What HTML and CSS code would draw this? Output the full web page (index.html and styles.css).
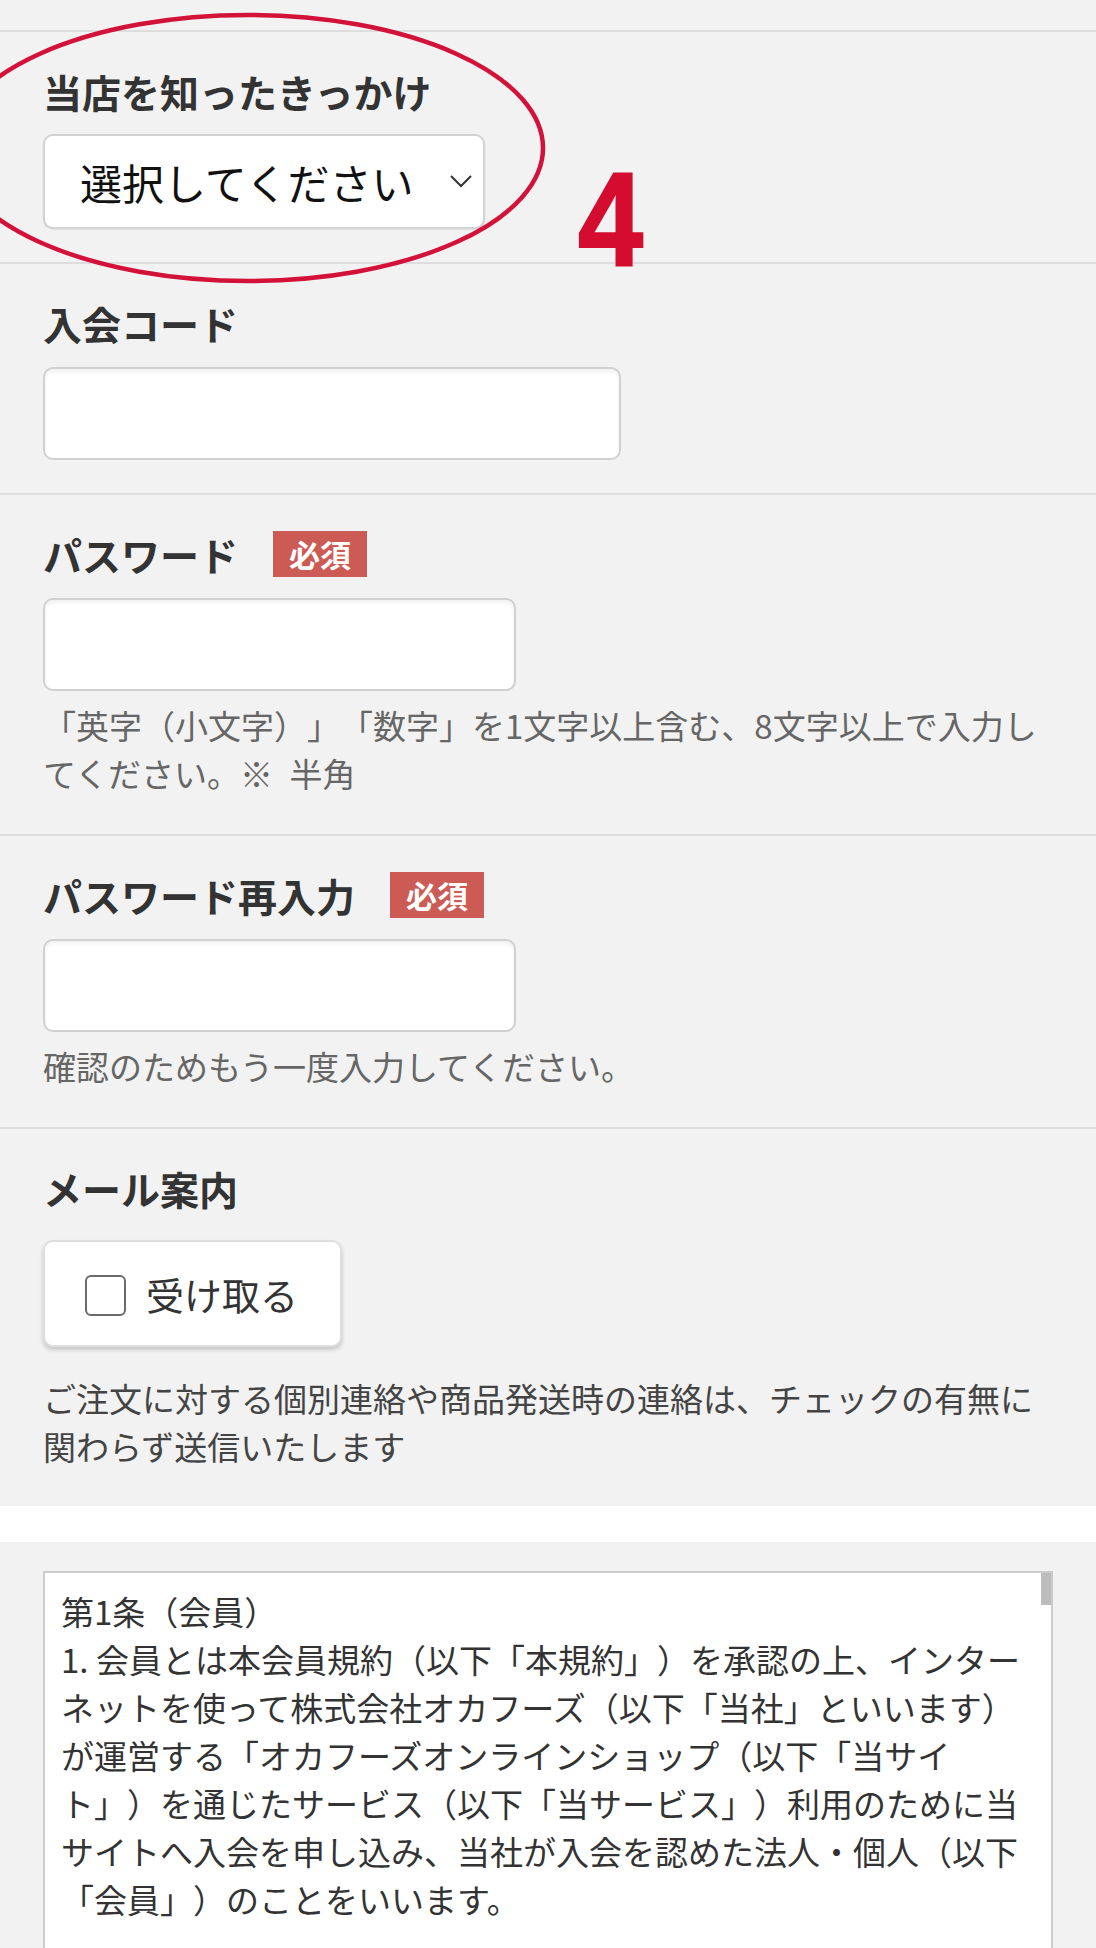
FILE: index.html
```html
<!DOCTYPE html>
<html lang="ja">
<head>
<meta charset="utf-8">
<title>会員登録</title>
<link rel="stylesheet" href="styles.css">
</head>
<body>
<div class="page">
  <div class="top"></div>

  <div class="field">
    <div class="label-row"><span class="label">当店を知ったきっかけ</span></div>
    <div class="select">
      <span class="select-text">選択してください</span>
      <svg class="chev" width="22" height="13" viewBox="0 0 22 13"><polyline points="1,1 11,11 21,1" fill="none" stroke="#333" stroke-width="2"/></svg>
    </div>
  </div>

  <div class="field">
    <div class="label-row"><span class="label">入会コード</span></div>
    <div class="input input-wide"></div>
  </div>

  <div class="field">
    <div class="label-row"><span class="label">パスワード</span><span class="badge">必須</span></div>
    <div class="input input-mid"></div>
    <p class="help">「英字（小文字）」「数字」を1文字以上含む、8文字以上で入力してください。※&ensp;半角</p>
  </div>

  <div class="field">
    <div class="label-row"><span class="label">パスワード再入力</span><span class="badge">必須</span></div>
    <div class="input input-mid"></div>
    <p class="help">確認のためもう一度入力してください。</p>
  </div>

  <div class="field field-last">
    <div class="label-row"><span class="label">メール案内</span></div>
    <div class="check-btn"><span class="check-box"></span><span class="check-text">受け取る</span></div>
    <p class="note">ご注文に対する個別連絡や商品発送時の連絡は、チェックの有無に関わらず送信いたします</p>
  </div>

  <div class="band"></div>

  <div class="terms-wrap">
    <div class="terms">
      <div class="thumb"></div>
      <p class="terms-text">第1条（会員）<br>1. 会員とは本会員規約（以下「本規約」）を承認の上、インターネットを使って株式会社オカフーズ（以下「当社」といいます）が運営する「オカフーズオンラインショップ（以下「当サイト」）を通じたサービス（以下「当サービス」）利用のために当サイトへ入会を申し込み、当社が入会を認めた法人・個人（以下「会員」）のことをいいます。</p>
    </div>
  </div>

  <svg class="mark" width="1096" height="300" viewBox="0 0 1096 300">
    <ellipse cx="248" cy="148" rx="295" ry="133" fill="none" stroke="#d3123a" stroke-width="4.5"/>
  </svg>
  <div class="num">4</div>
</div>
</body>
</html>
```

FILE: styles.css
```css
html, body {
  margin: 0;
  padding: 0;
  background: #f2f2f2;
}

.page {
  position: relative;
  width: 1096px;
  min-height: 1948px;
  overflow: hidden;
  background: #f2f2f2;
  font-family: "Noto Sans CJK JP", "Noto Sans", sans-serif;
  color: #333;
  text-spacing-trim: space-all;
}

.top {
  height: 30px;
  border-bottom: 2px solid #dddddd;
}

.field {
  padding: 30px 43px 33px;
  border-bottom: 2px solid #dddddd;
}

.field-last {
  border-bottom: none;
}

.label-row {
  display: flex;
  align-items: center;
  gap: 35px;
  height: 58px;
}

.label {
  font-size: 39px;
  line-height: 58px;
  font-weight: 700;
  color: #333;
}

.badge {
  display: block;
  height: 46px;
  line-height: 46px;
  padding: 0 16px;
  background: #cc5a55;
  color: #fff;
  font-size: 31px;
  font-weight: 700;
}

.select {
  box-sizing: border-box;
  margin-top: 14px;
  width: 442px;
  height: 95px;
  display: flex;
  align-items: center;
  justify-content: space-between;
  padding: 0 11px 0 35px;
  background: #fff;
  border: 2px solid #d2d2d2;
  border-radius: 10px;
  box-shadow: 0 1px 2px rgba(0, 0, 0, 0.08);
}

.select-text {
  font-size: 42px;
  line-height: 60px;
  color: #111;
}

.chev {
  display: block;
}

.input {
  box-sizing: border-box;
  margin-top: 15px;
  height: 93px;
  background: #fff;
  border: 2px solid #d0d0d0;
  border-radius: 10px;
  box-shadow: inset 0 3px 4px rgba(0, 0, 0, 0.06);
}

.input-wide {
  width: 578px;
}

.input-mid {
  width: 473px;
}

.help {
  margin: 10px 0 4px;
  font-size: 33px;
  line-height: 48px;
  color: #666;
}

.check-btn {
  box-sizing: border-box;
  margin-top: 23px;
  width: 299px;
  height: 107px;
  display: flex;
  align-items: center;
  padding-left: 40px;
  background: #fff;
  border: 2px solid #dedede;
  border-radius: 10px;
  box-shadow: 0 3px 4px rgba(0, 0, 0, 0.18);
}

.check-box {
  box-sizing: border-box;
  width: 41px;
  height: 41px;
  border: 2.5px solid #6a6a6a;
  border-radius: 6px;
  background: #fff;
  margin-top: 4px;
}

.check-text {
  margin-left: 20px;
  font-size: 38px;
  line-height: 56px;
  color: #333;
}

.note {
  margin: 27px 0 3px;
  font-size: 33px;
  line-height: 48px;
  color: #444;
}

.band {
  height: 36px;
  background: #ffffff;
}

.terms-wrap {
  padding: 29px 43px 0;
}

.terms {
  position: relative;
  box-sizing: border-box;
  height: 420px;
  background: #fff;
  border: 2px solid #cccccc;
  padding: 14px 15px 0 16px;
  overflow: hidden;
}

.thumb {
  position: absolute;
  top: 0;
  right: 0;
  width: 10px;
  height: 32px;
  background: #bdbdbd;
}

.terms-text {
  margin: 0;
  font-size: 33px;
  line-height: 48px;
  color: #333;
}

.mark {
  position: absolute;
  left: 0;
  top: 0;
  pointer-events: none;
}

.num {
  position: absolute;
  left: 578px;
  top: 154px;
  font-family: "Liberation Sans", Arial, sans-serif;
  font-weight: 700;
  font-size: 133px;
  line-height: 1;
  color: #d40c30;
  -webkit-text-stroke: 2px #d40c30;
  transform: scaleX(0.88);
  transform-origin: left top;
}
```
